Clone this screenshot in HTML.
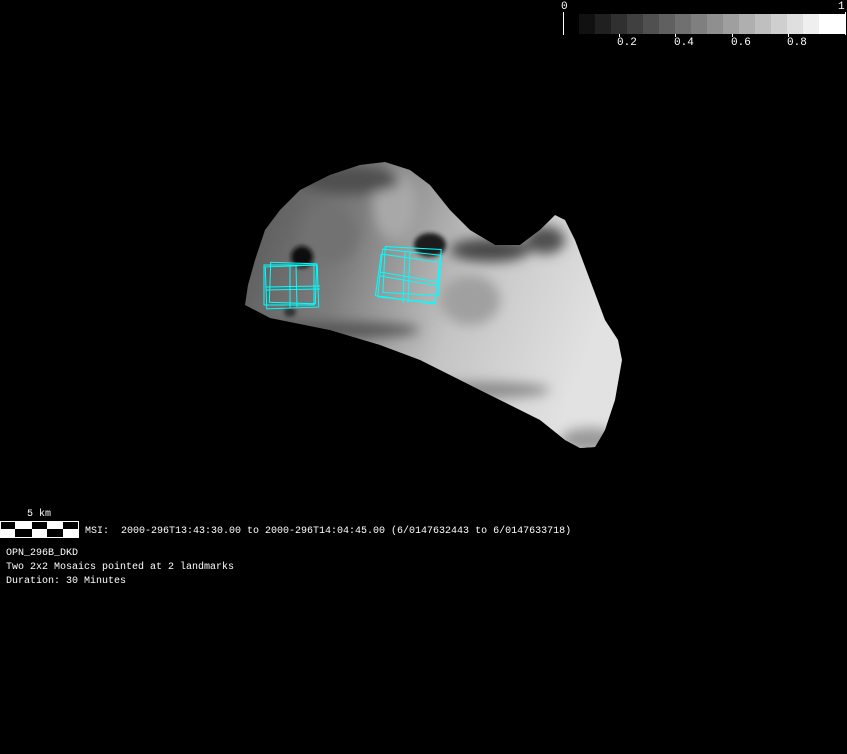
<!DOCTYPE html>
<html><head><style>
html,body{margin:0;padding:0;background:#000;width:847px;height:754px;overflow:hidden}
.t{position:absolute;color:#fff;font-family:"Liberation Mono",monospace;font-size:10px;line-height:13px;white-space:pre}
</style></head><body>
<svg width="847" height="754" style="position:absolute;left:0;top:0">
<defs>
<linearGradient id="g" x1="0" y1="0" x2="1" y2="0.3">
<stop offset="0" stop-color="#505050"/><stop offset="0.35" stop-color="#7e7e7e"/><stop offset="0.65" stop-color="#c4c4c4"/><stop offset="1" stop-color="#e2e2e2"/></linearGradient>
<filter id="b"><feGaussianBlur stdDeviation="6"/></filter>
<filter id="b2"><feGaussianBlur stdDeviation="2"/></filter>
<clipPath id="c"><polygon points="245,305 270,318 330,330 380,345 420,360 460,380 500,400 540,420 565,440 580,448 595,447 605,430 615,400 622,360 618,340 605,320 590,280 575,240 565,220 555,215 540,230 520,245 495,245 470,230 450,210 430,185 410,170 385,162 360,165 330,175 300,190 280,210 265,230 255,260 248,285"/></clipPath>
</defs>
<g clip-path="url(#c)">
<rect x="240" y="150" width="390" height="310" fill="url(#g)"/>
<g filter="url(#b)">
<ellipse cx="395" cy="205" rx="22" ry="35" fill="#a8a8a8"/>
<ellipse cx="330" cy="235" rx="28" ry="28" fill="#727272"/>
<ellipse cx="490" cy="250" rx="40" ry="12" fill="#4a4a4a"/>
<ellipse cx="545" cy="240" rx="20" ry="14" fill="#505050"/>
<ellipse cx="470" cy="300" rx="30" ry="25" fill="#a0a0a0"/>
<ellipse cx="350" cy="180" rx="50" ry="14" fill="#505050"/>
<ellipse cx="330" cy="330" rx="90" ry="8" fill="#555"/>
<ellipse cx="480" cy="390" rx="70" ry="8" fill="#8a8a8a"/>
<ellipse cx="590" cy="440" rx="30" ry="12" fill="#999"/>
</g>
<g filter="url(#b2)">
<ellipse cx="302" cy="257" rx="11" ry="11" fill="#111"/>
<ellipse cx="430" cy="245" rx="16" ry="12" fill="#1a1a1a"/>
<ellipse cx="290" cy="312" rx="6" ry="5" fill="#333"/>
</g>
</g>
<g fill="none" stroke="#00ffff" stroke-width="1">
<rect x="266" y="266" width="52" height="42" transform="rotate(-2 292 287)"/>
<rect x="264" y="265" width="50" height="40"/>
<rect x="270" y="263" width="46" height="40" transform="rotate(2 292 283)"/>
<line x1="266" y1="287" x2="320" y2="286"/><line x1="266" y1="290" x2="320" y2="289"/>
<line x1="290" y1="265" x2="290" y2="308"/><line x1="296" y1="265" x2="297" y2="307"/>
<rect x="380" y="252" width="58" height="48" transform="rotate(6 409 276)"/>
<rect x="384" y="248" width="56" height="46" transform="rotate(3 412 271)"/>
<rect x="378" y="258" width="60" height="42" transform="rotate(8 408 279)"/>
<line x1="380" y1="272" x2="438" y2="282"/><line x1="380" y1="276" x2="438" y2="286"/>
<line x1="405" y1="252" x2="403" y2="303"/><line x1="410" y1="252" x2="408" y2="303"/>
</g>
<g>
<rect x="579" y="14" width="16" height="20" fill="#111"/><rect x="595" y="14" width="16" height="20" fill="#202020"/><rect x="611" y="14" width="16" height="20" fill="#303030"/><rect x="627" y="14" width="16" height="20" fill="#404040"/><rect x="643" y="14" width="16" height="20" fill="#505050"/><rect x="659" y="14" width="16" height="20" fill="#606060"/><rect x="675" y="14" width="16" height="20" fill="#707070"/><rect x="691" y="14" width="16" height="20" fill="#7f7f7f"/><rect x="707" y="14" width="16" height="20" fill="#8f8f8f"/><rect x="723" y="14" width="16" height="20" fill="#9f9f9f"/><rect x="739" y="14" width="16" height="20" fill="#afafaf"/><rect x="755" y="14" width="16" height="20" fill="#bfbfbf"/><rect x="771" y="14" width="16" height="20" fill="#cfcfcf"/><rect x="787" y="14" width="16" height="20" fill="#dfdfdf"/><rect x="803" y="14" width="16" height="20" fill="#efefef"/><rect x="819" y="14" width="27" height="20" fill="#fff"/>
<line x1="563.5" y1="12" x2="563.5" y2="35" stroke="#fff"/><line x1="845.5" y1="12" x2="845.5" y2="35" stroke="#fff"/>
<line x1="619.5" y1="34" x2="619.5" y2="37" stroke="#fff"/><line x1="675.5" y1="34" x2="675.5" y2="37" stroke="#fff"/><line x1="732.5" y1="34" x2="732.5" y2="37" stroke="#fff"/><line x1="788.5" y1="34" x2="788.5" y2="37" stroke="#fff"/>
</g>
<rect x="0.5" y="521.5" width="78" height="16" fill="#000" stroke="#fff"/>
<rect x="15" y="522" width="17" height="7" fill="#fff"/><rect x="47" y="522" width="16" height="7" fill="#fff"/>
<rect x="1" y="529" width="14" height="8" fill="#fff"/><rect x="32" y="529" width="15" height="8" fill="#fff"/><rect x="63" y="529" width="15" height="8" fill="#fff"/>
</svg>
<div class="t" style="left:561px;top:1px;font-size:11px">0</div>
<div class="t" style="left:838px;top:1px;font-size:11px">1</div>
<div class="t" style="left:617px;top:37px;font-size:11px">0.2</div>
<div class="t" style="left:674px;top:37px;font-size:11px">0.4</div>
<div class="t" style="left:731px;top:37px;font-size:11px">0.6</div>
<div class="t" style="left:787px;top:37px;font-size:11px">0.8</div>
<div class="t" style="left:27px;top:508px">5 km</div>
<div class="t" style="left:85px;top:525px">MSI:  2000-296T13:43:30.00 to 2000-296T14:04:45.00 (6/0147632443 to 6/0147633718)</div>
<div class="t" style="left:6px;top:547px;line-height:14px">OPN_296B_DKD
Two 2x2 Mosaics pointed at 2 landmarks
Duration: 30 Minutes</div>
</body></html>
